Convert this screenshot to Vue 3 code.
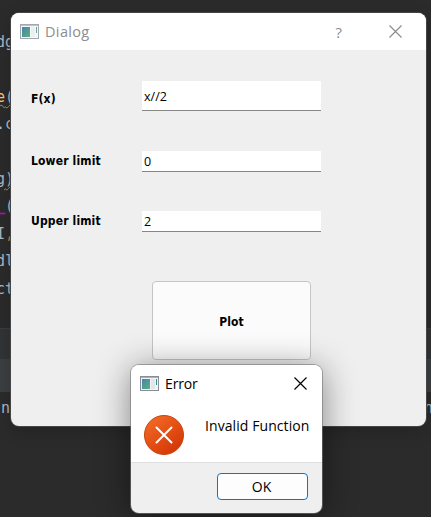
<script setup>
import { ref } from 'vue'

const codeLines = [
  { a: 'd', b: 'g' },
  { a: '', b: '' },
  { a: 'e', b: '(', tone: 'gold', wavy: true },
  { a: '.', b: 'c' },
  { a: '', b: '' },
  { a: 'g', b: ')', wavy: true },
  { a: '_', b: '(', tone: 'magenta' },
  { a: 'I', b: ',', tail: 'orange' },
  { a: 'd', b: 'l' },
  { a: 'c', b: 't' },
]
const fields = ref([
  { label: 'F(x)', value: 'x//2', kind: 'tall' },
  { label: 'Lower limit', value: '0', kind: 'lower' },
  { label: 'Upper limit', value: '2', kind: 'upper' },
])
</script>

<template>
  <main class="desktop">
    <div class="editor">
      <div class="code">
        <div v-for="(line, i) in codeLines" :key="i" class="line" :class="{ wavy: line.wavy }">
          <span :class="line.tone">{{ line.a }}</span><span :class="line.tail">{{ line.b }}</span>
        </div>
      </div>
      <div class="tabs"></div>
      <div class="toolbar"></div>
      <div class="console"><span>n</span><span>n</span></div>
    </div>

    <section class="window dialog">
      <header class="titlebar">
        <svg class="app-icon" width="19" height="16" viewBox="0 0 19 16">
          <defs>
            <linearGradient id="tile" x1="0" y1="0" x2="1" y2="1">
              <stop offset="0" stop-color="#4a80b4" /><stop offset="1" stop-color="#58b474" />
            </linearGradient>
          </defs>
          <rect x=".5" y=".5" width="18" height="14" fill="#f6f7f8" stroke="#a3a8b0" />
          <path d="M1 1.5h17" stroke="#bec2c8" />
          <rect x="2" y="3" width="8" height="10" fill="url(#tile)" />
          <path d="M11 3h4v10h-4z" fill="#eceef1" />
          <path d="M16.5 3v6" stroke="#66a899" />
        </svg>
        <h1>Dialog</h1>
        <span class="help">?</span>
        <svg class="close" width="13" height="13" viewBox="0 0 13 13"><path d="M.5.5l12 12M12.5.5l-12 12" /></svg>
      </header>
      <form class="form" @submit.prevent>
        <label v-for="field in fields" :key="field.label" class="field" :class="field.kind">
          <span>{{ field.label }}</span>
          <input v-model="field.value" type="text" spellcheck="false" />
        </label>
        <button class="plot">Plot</button>
      </form>
    </section>

    <section class="window error">
      <header class="titlebar">
        <svg class="app-icon" width="19" height="16" viewBox="0 0 19 16">
          <rect x=".5" y=".5" width="18" height="14" fill="#f1f2f3" stroke="#868d97" />
          <path d="M1 1.5h17" stroke="#adb2b9" />
          <rect x="2" y="3" width="8" height="10" fill="url(#tile)" />
          <path d="M11 3h4v10h-4z" fill="#e2e5e9" />
          <path d="M16.5 3v6" stroke="#398e80" />
        </svg>
        <h2>Error</h2>
        <svg class="close" width="13" height="13" viewBox="0 0 13 13"><path d="M.5.5l12 12M12.5.5l-12 12" /></svg>
      </header>
      <div class="message">
        <svg width="40" height="40" viewBox="0 0 40 40">
          <defs>
            <linearGradient id="alert" x1=".15" y1=".1" x2=".8" y2=".95">
              <stop offset="0" stop-color="#f16825" /><stop offset="1" stop-color="#d43604" />
            </linearGradient>
          </defs>
          <circle cx="20" cy="20" r="19.5" fill="url(#alert)" stroke="#c8440f" />
          <path d="M12.5 12.5l15 15M27.5 12.5l-15 15" fill="none" stroke="#fff" stroke-width="2" stroke-linecap="round" />
        </svg>
        <p>Invalid Function</p>
      </div>
      <footer><button class="ok">OK</button></footer>
    </section>
  </main>
</template>

<style>
body { margin: 0; overflow: hidden; }
</style>

<style scoped>
* { box-sizing: border-box; }
.desktop {
  position: relative;
  width: 431px;
  height: 517px;
  overflow: hidden;
  background: #2b2b2b;
  font-family: "Open Sans", "Noto Sans", sans-serif;
}
.editor { display: flex; flex-direction: column; height: 517px; font: 15px/27.4px "DejaVu Sans Mono", monospace; color: #a9b7c6; }
.code { height: 329px; padding-top: 29px; border-bottom: 1px solid #3b3c3d; }
.line { height: 27.4px; margin-left: -4px; white-space: nowrap; }
.gold { color: #ffc66d; }
.magenta { color: #c800c8; font-weight: 700; text-decoration: underline 1px; text-underline-offset: 2px; }
.orange { color: #cc7832; }
.wavy { text-decoration: underline wavy #9b9470 1px; text-underline-offset: 2px; }
.tabs { height: 30px; background: #313335; }
.toolbar { height: 33px; background: #3c3f41; }
.console { display: flex; justify-content: space-between; padding: 3px 0 0 1px; }
.console span:last-child { margin-right: -2px; }

.window { position: absolute; overflow: hidden; border-radius: 8px; background: #efefef; }
.titlebar { display: flex; align-items: center; background: #fff; }
.titlebar h1, .titlebar h2 { margin: 0; font-weight: 400; line-height: 20px; }
.close { fill: none; stroke: currentColor; stroke-width: 1.2; }

.dialog { left: 11px; top: 13px; width: 415px; height: 413px; box-shadow: 0 0 0 1px #454545, 0 5px 18px #0003; }
.dialog .titlebar { height: 37px; padding: 0 24px 0 9px; color: #8d8d8d; }
.dialog h1 { margin-left: 6px; font-size: 14.5px; letter-spacing: .35px; }
.help { margin-left: auto; font-size: 15px; line-height: 20px; }
.dialog .close { margin-left: 47px; }
.form { display: flex; flex-direction: column; padding: 31px 0 0 20px; }
.field { display: grid; grid-template-columns: 111px 179px; align-items: center; color: #000; }
.field span { padding-bottom: 2px; font: 700 12px/18px "DejaVu Sans Condensed", "DejaVu Sans", sans-serif; font-stretch: condensed; letter-spacing: .15px; }
.field.tall span { padding: 5px 0 0; }
.field input {
  width: 179px;
  height: 100%;
  padding: 0 0 0 2px;
  border: 0;
  border-bottom: 1px solid #868686;
  border-radius: 0;
  outline: 0;
  background: #fff;
  color: #000;
  font: 12.5px "Open Sans", sans-serif;
}
.field.tall input { padding-top: 2px; }
.tall { height: 30px; margin-bottom: 40px; }
.lower { height: 21px; margin-bottom: 39px; }
.upper { height: 21px; margin-bottom: 49px; }
.plot {
  width: 159px;
  height: 79px;
  margin-left: 121px;
  padding: 2px 0 0;
  border: 1px solid #c5c5c5;
  border-radius: 4px;
  background: #fbfbfb;
  color: #000;
  font: 700 12px "DejaVu Sans Condensed", "DejaVu Sans", sans-serif;
  font-stretch: condensed;
  letter-spacing: .1px;
}

.error { left: 131px; top: 365px; width: 191px; height: 148px; box-shadow: 0 0 0 1px #77777799, 0 4px 34px #0007; }
.error .titlebar { height: 37px; padding: 0 15px 0 9px; color: #000; }
.error h2 { margin-left: 6px; font-size: 14px; letter-spacing: -.15px; }
.error .close { margin-left: auto; }
.message { display: flex; gap: 21px; height: 60px; padding: 13px 0 0 13px; background: #fff; color: #000; }
.message p { margin: 1px 0 0; font-size: 14px; line-height: 20px; letter-spacing: .08px; white-space: nowrap; }
.error footer { display: flex; justify-content: flex-end; height: 51px; padding: 10px 14px 0 0; border-top: 1px solid #dfdfdf; }
.ok { width: 91px; height: 27px; padding: 0 2px 0 0; border: 1px solid #0078d4; border-radius: 4px; background: #fdfdfd; color: #000; font: 14px "Open Sans", sans-serif; }
</style>
